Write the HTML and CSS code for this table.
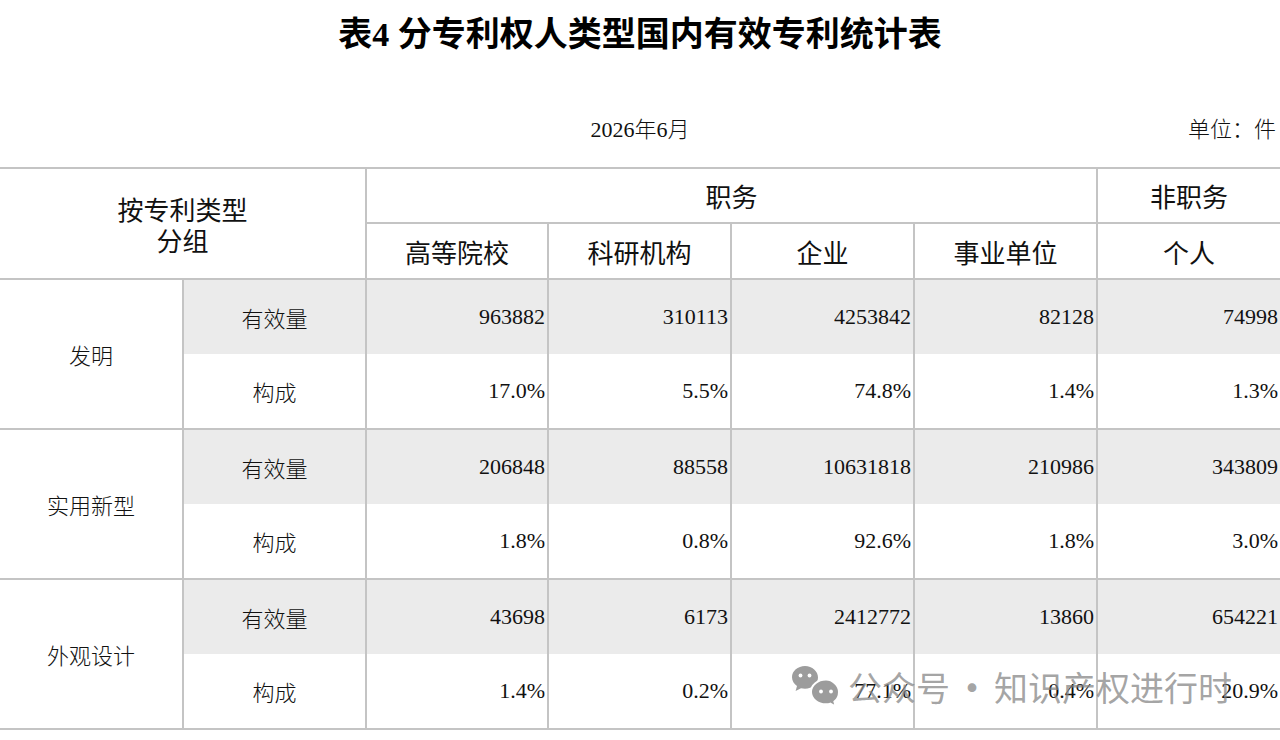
FILE: index.html
```html
<!DOCTYPE html>
<html lang="zh-CN">
<head>
<meta charset="utf-8">
<title>表4 分专利权人类型国内有效专利统计表</title>
<link rel="stylesheet" href="styles.css">
</head>
<body>
<div class="page">
  <h1 class="title">表4 分专利权人类型国内有效专利统计表</h1>
  <div class="meta">
    <span class="meta-spacer"></span>
    <span class="meta-date">2026年6月</span>
    <span class="meta-unit">单位：件</span>
  </div>
  <table class="stats">
    <colgroup>
      <col class="c183"><col class="c183"><col class="c182"><col class="c183"><col class="c183"><col class="c183"><col class="c183">
    </colgroup>
    <thead>
      <tr class="h1">
        <th class="corner edge-l" colspan="2" rowspan="2">按专利类型<br>分组</th>
        <th colspan="4">职务</th>
        <th class="edge-r">非职务</th>
      </tr>
      <tr class="h2">
        <th>高等院校</th><th>科研机构</th><th>企业</th><th>事业单位</th><th class="edge-r">个人</th>
      </tr>
    </thead>
    <tbody>
      <tr class="qty">
        <th class="grp edge-l" rowspan="2">发明</th>
        <th class="sub">有效量</th>
        <td>963882</td><td>310113</td><td>4253842</td><td>82128</td><td class="edge-r">74998</td>
      </tr>
      <tr class="pct">
        <th class="sub">构成</th>
        <td>17.0%</td><td>5.5%</td><td>74.8%</td><td>1.4%</td><td class="edge-r">1.3%</td>
      </tr>
      <tr class="qty">
        <th class="grp edge-l" rowspan="2">实用新型</th>
        <th class="sub">有效量</th>
        <td>206848</td><td>88558</td><td>10631818</td><td>210986</td><td class="edge-r">343809</td>
      </tr>
      <tr class="pct">
        <th class="sub">构成</th>
        <td>1.8%</td><td>0.8%</td><td>92.6%</td><td>1.8%</td><td class="edge-r">3.0%</td>
      </tr>
      <tr class="qty">
        <th class="grp edge-l" rowspan="2">外观设计</th>
        <th class="sub">有效量</th>
        <td>43698</td><td>6173</td><td>2412772</td><td>13860</td><td class="edge-r">654221</td>
      </tr>
      <tr class="pct">
        <th class="sub">构成</th>
        <td>1.4%</td><td>0.2%</td><td>77.1%</td><td>0.4%</td><td class="edge-r">20.9%</td>
      </tr>
    </tbody>
  </table>
  <div class="watermark">
    <svg class="wm-icon" width="52" height="46" viewBox="0 0 52 46" aria-hidden="true">
      <path d="M17 2C9.8 2 4 7 4 13.2c0 3.6 2 6.8 5 8.8L7.6 27l5.4-2.8c1.3.3 2.6.5 4 .5 7.2 0 13-5 13-11.2S24.2 2 17 2z" fill="#9c9c9c"/>
      <circle cx="12.5" cy="11.5" r="1.9" fill="#fff"/>
      <circle cx="21.5" cy="11.5" r="1.9" fill="#fff"/>
      <path d="M38 15.5c-8.3 0-15 5.6-15 12.4s6.7 12.4 15 12.4c1.5 0 3-.2 4.3-.6l5.4 2.9-1.3-5c3-2.3 4.6-5.9 4.6-9.7 0-6.8-6.7-12.4-13-12.4z" fill="#9c9c9c" stroke="#fff" stroke-width="2"/>
      <circle cx="33" cy="27.5" r="1.9" fill="#fff"/>
      <circle cx="43" cy="27.5" r="1.9" fill="#fff"/>
    </svg>
    <span class="wm-text">公众号<span class="wm-dot">·</span>知识产权进行时</span>
  </div>
</div>
</body>
</html>
```

FILE: styles.css
```css
html, body {
  margin: 0;
  padding: 0;
  background: #fff;
}

body {
  width: 1280px;
  height: 740px;
  overflow: hidden;
  font-family: "Liberation Serif", "Noto Sans CJK SC", serif;
  color: #111;
}

.page {
  position: relative;
  width: 1280px;
  height: 740px;
}

.title {
  margin: 0;
  height: 68px;
  line-height: 70px;
  font-size: 34px;
  font-weight: 700;
  text-align: center;
  color: #000;
}

.meta {
  display: grid;
  grid-template-columns: 1fr auto 1fr;
  align-items: center;
  margin-top: 47px;
  height: 30px;
  line-height: 30px;
  font-size: 22px;
  font-weight: 300;
}

.meta-date {
  grid-column: 2;
}

.meta-unit {
  justify-self: end;
  padding-right: 4px;
}

.stats {
  margin-top: 22px;
  width: 1280px;
  table-layout: fixed;
  border-collapse: collapse;
  border: none;
}

.c183 { width: 183px; }
.c182 { width: 182px; }

.stats th,
.stats td {
  border: 2px solid #c4c4c4;
  padding: 0 2px;
}

.stats .edge-l { border-left: none; }
.stats .edge-r { border-right: none; }

.stats thead th {
  font-size: 26px;
  font-weight: 400;
  text-align: center;
  color: #111;
}

.stats .corner {
  line-height: 31px;
  padding-top: 6px;
}

.h1 { height: 55px; }
.h2 { height: 56px; }

.qty, .pct { height: 75px; }

.stats tbody th {
  font-size: 22px;
  font-weight: 300;
  text-align: center;
  color: #111;
}

.stats tbody td {
  font-size: 22px;
  text-align: right;
  color: #111;
}

.qty td,
.qty .sub {
  background: #ebebeb;
  border-bottom-style: none;
}

.pct td,
.pct .sub {
  border-top-style: none;
}

.grp {
  background: #fff;
}

.watermark {
  position: absolute;
  left: 788px;
  top: 664px;
  display: flex;
  align-items: center;
  gap: 8px;
  pointer-events: none;
}

.wm-icon {
  display: block;
}

.wm-text {
  font-family: "Noto Sans CJK SC", sans-serif;
  font-size: 34px;
  line-height: 46px;
  font-weight: 400;
  color: rgba(130, 130, 130, 0.72);
  white-space: nowrap;
}

.wm-dot {
  display: inline-block;
  width: 44px;
  text-align: center;
  font-weight: 700;
}
```
